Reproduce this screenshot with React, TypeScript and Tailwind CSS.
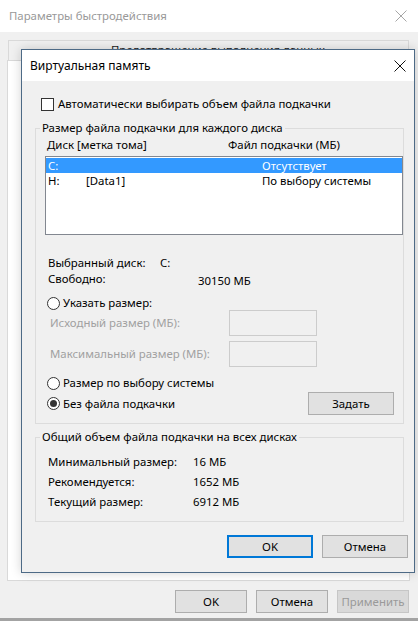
import React from "react";

const FONT = "font-['Noto_Sans','Liberation_Sans',sans-serif]";

function CloseIcon({ color }: { color: string }) {
  return (
    <svg width="12" height="12" viewBox="0 0 12 12" className="block">
      <path d="M0.5 0.5 L11.5 11.5 M11.5 0.5 L0.5 11.5" stroke={color} strokeWidth="1" fill="none" />
    </svg>
  );
}

function Radio({ checked }: { checked?: boolean }) {
  return (
    <span className="flex h-[13px] w-[13px] shrink-0 items-center justify-center rounded-full border border-[#333333] bg-white">
      {checked && <span className="h-[7px] w-[7px] rounded-full bg-[#333333]" />}
    </span>
  );
}

function WinButton({
  children,
  w,
  variant = "normal",
}: {
  children: React.ReactNode;
  w: string;
  variant?: "normal" | "default" | "disabled";
}) {
  const cls =
    variant === "default"
      ? "border-2 border-[#0078d7] bg-[#e1e1e1] text-black"
      : variant === "disabled"
        ? "border border-[#c6c6c6] bg-[#d9d9d9] text-[#9a9a9a]"
        : "border border-[#adadad] bg-[#e1e1e1] text-black";
  return (
    <div className={`flex h-[23px] items-center justify-center ${w} ${cls}`}>
      {children}
    </div>
  );
}

export default function App() {
  return (
    <div
      className={`relative flex h-[621px] w-[418px] flex-col overflow-hidden bg-[#f0f0f0] text-[11.4px] leading-[16px] text-black ${FONT}`}
    >
      {/* Back window: Параметры быстродействия */}
      <div className="flex h-[32px] shrink-0 items-center justify-between bg-white pl-[9px] pr-[11px] text-[#999999]">
        <span>Параметры быстродействия</span>
        <CloseIcon color="#a6a6a6" />
      </div>
      <div className="ml-[8px] mt-[8px] h-[20px] w-[401px] shrink-0 border-l border-r border-t border-[#d9d9d9] pl-[102px] pt-[1px] text-[#222222]">
        Предотвращение выполнения данных
      </div>
      <div className="ml-[7px] h-[521px] w-[403px] shrink-0 border border-[#d9d9d9] bg-white" />
      <div className="mt-[9px] flex shrink-0 justify-end gap-[9px] pr-[9px]">
        <WinButton w="w-[72px]">OK</WinButton>
        <WinButton w="w-[72px]">Отмена</WinButton>
        <WinButton w="w-[72px]" variant="disabled">
          Применить
        </WinButton>
      </div>
      <div className="mt-[5px] h-[3px] w-full shrink-0 bg-[#a3a3a3]" />

      {/* Front dialog: Виртуальная память */}
      <div className="absolute left-[21px] top-[49px] flex h-[524px] w-[394px] flex-col border border-[#4d6a86] bg-[#f0f0f0] shadow-[0_0_10px_rgba(0,0,0,0.18)]">
        <div className="flex h-[31px] shrink-0 items-center justify-between bg-white pl-[8px] pr-[8px] text-[12px]">
          <span>Виртуальная память</span>
          <CloseIcon color="#111111" />
        </div>

        <div className="flex flex-col">
          <div className="ml-[19px] mt-[15px] flex h-[16px] items-center gap-[4px]">
            <span className="h-[13px] w-[13px] border border-[#333333] bg-white" />
            <span>Автоматически выбирать объем файла подкачки</span>
          </div>

          <fieldset className="ml-[13px] mt-[8px] w-[369px] border border-[#dcdcdc] pb-[8px]">
            <legend className="ml-[4px] px-[2px]">Размер файла подкачки для каждого диска</legend>
            <div className="flex h-[18px] items-center pl-[11px]">
              <span className="w-[181px]">Диск [метка тома]</span>
              <span>Файл подкачки (МБ)</span>
            </div>
            <div className="ml-[9px] mt-[2px] h-[79px] w-[358px] border border-[#828790] bg-white pt-[1px] leading-[15px]">
              <div className="flex h-[15px] items-center bg-[#3399ff] pl-[2px] text-white">
                <span className="w-[38px]">C:</span>
                <span className="w-[176px]" />
                <span>Отсутствует</span>
              </div>
              <div className="flex h-[15px] items-center pl-[2px]">
                <span className="w-[38px]">H:</span>
                <span className="w-[176px]">[Data1]</span>
                <span>По выбору системы</span>
              </div>
            </div>

            <div className="mt-[20px] flex h-[16px] items-center pl-[12px]">
              <span className="w-[112px]">Выбранный диск:</span>
              <span>C:</span>
            </div>
            <div className="flex h-[16px] items-center pl-[12px]">
              <span className="w-[150px]">Свободно:</span>
              <span className="pt-[3px]">30150 МБ</span>
            </div>

            <div className="mt-[9px] flex h-[14px] items-center gap-[3px] pl-[11px]">
              <Radio />
              <span>Указать размер:</span>
            </div>
            <div className="flex h-[26px] items-center pl-[14px] text-[#a0a0a0]">
              <span className="w-[179px]">Исходный размер (МБ):</span>
              <span className="h-[26px] w-[88px] border border-[#cccccc] bg-[#f0f0f0]" />
            </div>
            <div className="mt-[5px] flex h-[26px] items-center pl-[14px] text-[#a0a0a0]">
              <span className="w-[179px]">Максимальный размер (МБ):</span>
              <span className="h-[26px] w-[88px] border border-[#cccccc] bg-[#f0f0f0]" />
            </div>

            <div className="mt-[8px] flex h-[16px] items-center gap-[3px] pl-[11px]">
              <Radio />
              <span>Размер по выбору системы</span>
            </div>
            <div className="mt-[1px] flex h-[23px] items-center gap-[3px] pl-[11px] pr-[9px]">
              <Radio checked />
              <span>Без файла подкачки</span>
              <div className="ml-auto">
                <WinButton w="w-[86px]">Задать</WinButton>
              </div>
            </div>
          </fieldset>

          <fieldset className="ml-[13px] mt-[5px] w-[369px] border border-[#dcdcdc] pb-[9px]">
            <legend className="ml-[4px] px-[2px]">Общий объем файла подкачки на всех дисках</legend>
            <div className="mt-[7px] flex h-[20px] items-center pl-[12px]">
              <span className="w-[145px]">Минимальный размер:</span>
              <span>16 МБ</span>
            </div>
            <div className="flex h-[20px] items-center pl-[12px]">
              <span className="w-[145px]">Рекомендуется:</span>
              <span>1652 МБ</span>
            </div>
            <div className="flex h-[20px] items-center pl-[12px]">
              <span className="w-[145px]">Текущий размер:</span>
              <span>6912 МБ</span>
            </div>
          </fieldset>

          <div className="mt-[13px] flex justify-end gap-[9px] pr-[6px]">
            <WinButton w="w-[86px]" variant="default">
              OK
            </WinButton>
            <WinButton w="w-[86px]">Отмена</WinButton>
          </div>
        </div>
      </div>
    </div>
  );
}
